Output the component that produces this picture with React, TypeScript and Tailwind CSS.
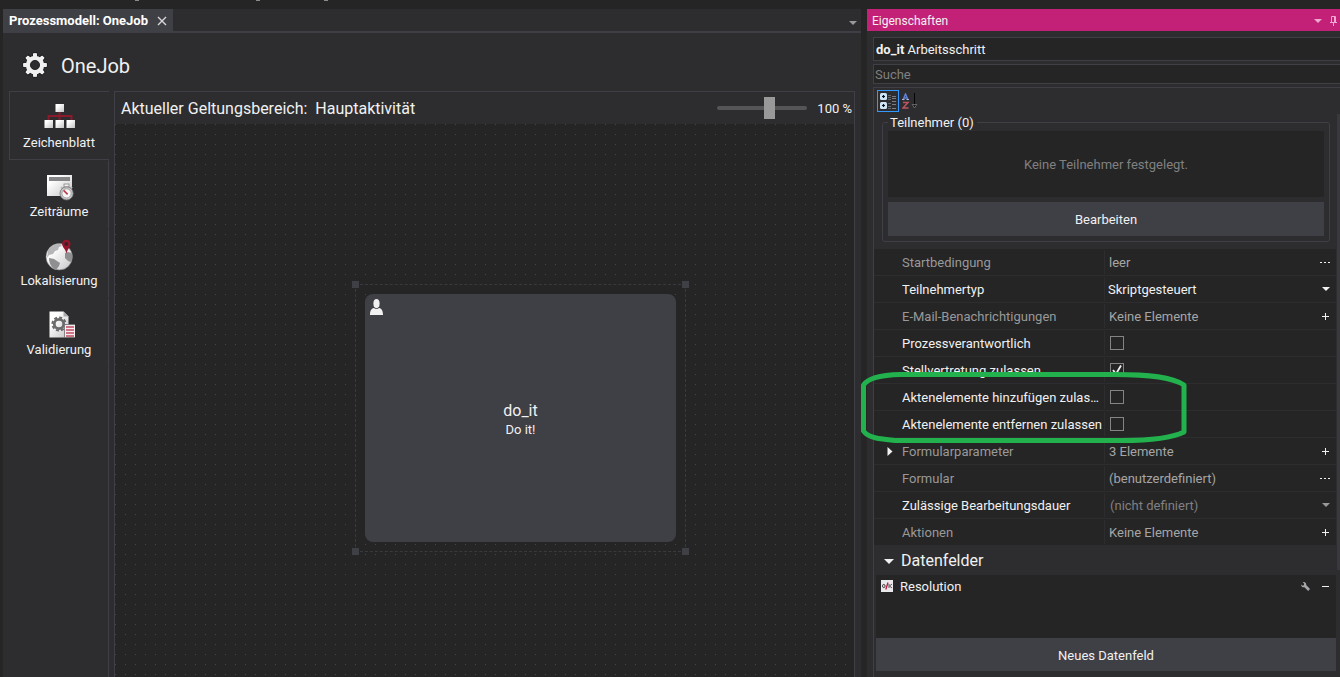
import React from "react";

type RowAction = "dots" | "plus" | "none";

interface PropertyRowProps {
  id: string;
  label: string;
  muted?: boolean;
  expandable?: boolean;
  action?: RowAction;
  children: React.ReactNode;
}

function GearIcon() {
  const teeth = [0, 45, 90, 135, 180, 225, 270, 315];
  return (
    <svg width="26" height="26" viewBox="0 0 26 26" aria-hidden="true">
      <g stroke="#161616" strokeWidth="1" fill="#f4f4f4">
        {teeth.map((a) => (
          <path key={a} d="M10.3 6l.6-5h4.2l.6 5z" transform={`rotate(${a} 13 13)`} />
        ))}
      </g>
      <circle cx="13" cy="13" r="6.800" fill="none" stroke="#f0f0f0" strokeWidth="4.800" />
      <g fill="#f0f0f0">
        {teeth.map((a) => (
          <path key={a} d="M10.600 7l.7-5.800h3.400l.7 5.800z" transform={`rotate(${a} 13 13)`} />
        ))}
      </g>
      <circle cx="13" cy="13" r="4.600" fill="#2d2d30" stroke="#1c1c1c" strokeWidth="0.8" />
    </svg>
  );
}

function Gradients() {
  return (
    <svg width="0" height="0" className="absolute" aria-hidden="true">
      <defs>
        <linearGradient id="silver" x1="0" y1="0" x2="1" y2="1">
          <stop offset="0.25" stopColor="#ffffff" />
          <stop offset="1" stopColor="#c4c4c6" />
        </linearGradient>
      </defs>
    </svg>
  );
}

function SheetIcon() {
  return (
    <svg width="32" height="32" viewBox="0 0 32 32" aria-hidden="true">
      <path d="M16.500 11v8M5.500 19v-4h23v4" fill="none" stroke="#8b1a2b" strokeWidth="2" />
      <g fill="url(#silver)">
        <rect x="12.500" y="3" width="8.500" height="8" />
        <rect x="1.500" y="19" width="8.500" height="8" />
        <rect x="12.500" y="19" width="8.500" height="8" />
        <rect x="23.500" y="19" width="8.500" height="8" />
      </g>
    </svg>
  );
}

function PeriodIcon() {
  return (
    <svg width="32" height="32" viewBox="0 0 32 32" aria-hidden="true">
      <rect x="4" y="5" width="25" height="21" fill="url(#silver)" />
      <rect x="6" y="7" width="21" height="4" fill="#858587" />
      <rect x="21" y="14" width="5" height="3" fill="#f0f0f0" stroke="#777" strokeWidth="0.7" />
      <path d="M18 17l2 2M29 17l-2 2" stroke="#bbb" strokeWidth="2" />
      <circle cx="23.6" cy="23.4" r="6.6" fill="#c9c9cb" stroke="#6e6e70" strokeWidth="0.8" />
      <circle cx="23.6" cy="23.4" r="4.6" fill="#f6f6f6" stroke="#8a8a8c" strokeWidth="0.7" />
      <path d="M20.6 20.4l4 4" stroke="#c0394a" strokeWidth="1.6" />
    </svg>
  );
}

function GlobeIcon() {
  return (
    <svg width="32" height="32" viewBox="0 0 32 32" aria-hidden="true">
      <circle cx="16.2" cy="17.8" r="13.2" fill="url(#silver)" stroke="#77777a" strokeWidth="0.6" />
      <path d="M5 11.5C8 6.500 12 5 17 5l2 2-3 1-1 3-3 1-2 3-4 1-2 3z" fill="#b5b5b8" />
      <path d="M6 19l5 1 6 4-1 3-3 4c-4-2-7-6-7-12z" fill="#8f8f92" />
      <path d="M22 14l3-1 3.500 1c1 3 .8 6-.5 9l-3-1-3-3z" fill="#8f8f92" />
      <path d="M23.300 0.800a4.200 4.200 0 0 1 4.200 4.200c0 3-3 5-4 9.500C22.500 10 19.100 8 19.100 5a4.200 4.200 0 0 1 4.200-4.200z" fill="#96142c" />
      <circle cx="23.300" cy="5" r="1.900" fill="#3a2026" />
    </svg>
  );
}

function ValidateIcon() {
  return (
    <svg width="32" height="32" viewBox="0 0 32 32" aria-hidden="true">
      <path d="M6.500 3.500h14l5 5v21h-19z" fill="url(#silver)" />
      <path d="M20.500 3.500l5 5h-5z" fill="#a9a9ab" />
      <circle cx="16" cy="16" r="6.600" fill="none" stroke="#6a6a6c" strokeWidth="2" strokeDasharray="3 2.180" />
      <circle cx="16" cy="16" r="4.700" fill="none" stroke="#6a6a6c" strokeWidth="2.800" />
      <rect x="21.500" y="16.500" width="11" height="13" fill="#f3eef0" stroke="#6e6e70" strokeWidth="0.800" />
      <path d="M23 19h8M23 22h8M23 25h8M23 28h8" stroke="#c04c62" strokeWidth="1.300" />
    </svg>
  );
}

const NAV = [
  { label: "Zeichenblatt", icon: <SheetIcon />, active: true },
  { label: "Zeiträume", icon: <PeriodIcon />, active: false },
  { label: "Lokalisierung", icon: <GlobeIcon />, active: false },
  { label: "Validierung", icon: <ValidateIcon />, active: false },
];

function DownTriangle({ className }: { className?: string }) {
  return (
    <svg width="8" height="4" viewBox="0 0 8 4" className={className} aria-hidden="true">
      <path d="M0 0h8L4 4z" fill="currentColor" />
    </svg>
  );
}

function RowActionButton({ action, label }: { action: RowAction; label: string }) {
  if (action === "none") return null;
  return (
    <button
      type="button"
      aria-label={`${label} bearbeiten`}
      className="mr-px flex h-5 w-5 items-center justify-center text-[#f1f1f1]"
    >
      {action === "dots" ? (
        <svg width="10" height="2" viewBox="0 0 10 2" aria-hidden="true">
          <path d="M0 1.500h2M4 1.500h2M8 1.500h2" stroke="currentColor" />
        </svg>
      ) : (
        <svg width="7" height="7" viewBox="0 0 7 7" aria-hidden="true">
          <path d="M0 3.500h7M3.500 0v7" stroke="currentColor" />
        </svg>
      )}
    </button>
  );
}

function PropertyRow({ id, label, muted, expandable, action = "none", children }: PropertyRowProps) {
  return (
    <div className="flex h-[27px] border-b border-[#2d2d30] last:h-[26px] last:border-b-0">
      <div className="flex w-7 shrink-0 items-center pl-3">
        {expandable && (
          <button type="button" aria-label={`${label} aufklappen`} className="text-[#f1f1f1]">
            <svg width="8" height="9" viewBox="0 0 8 9" aria-hidden="true">
              <path d="M1.500 0l5 4.500-5 4.500z" fill="currentColor" />
            </svg>
          </button>
        )}
      </div>
      <label
        htmlFor={id}
        className={`w-[202px] shrink-0 truncate leading-[27px] ${muted ? "text-[#999999]" : "text-[#f1f1f1]"}`}
      >
        {label}
      </label>
      <div className="my-px flex min-w-0 flex-1 items-center border-l border-[#2d2d30] pl-[3px]">
        <div className="relative flex min-w-0 flex-1 items-center">{children}</div>
        <RowActionButton action={action} label={label} />
      </div>
    </div>
  );
}

function TextValue({ id, value }: { id: string; value: string }) {
  return (
    <input id={id} readOnly defaultValue={value} className="w-full bg-transparent pt-px pl-px text-[#a5a5a5] outline-none" />
  );
}

function CheckValue({ id, checked }: { id: string; checked?: boolean }) {
  return (
    <span className="relative ml-0.5 flex">
      <input
        id={id}
        type="checkbox"
        defaultChecked={checked}
        className="peer h-3.5 w-3.5 appearance-none border border-[#848486] bg-[#252526]"
      />
      <svg
        width="14"
        height="14"
        viewBox="0 0 14 14"
        className="pointer-events-none absolute inset-0 hidden peer-checked:block"
        aria-hidden="true"
      >
        <path d="M3 7l3 4 5-8.500" fill="none" stroke="#f1f1f1" strokeWidth="1.800" />
      </svg>
    </span>
  );
}

function SelectValue({ id, value, muted }: { id: string; value: string; muted?: boolean }) {
  return (
    <>
      <select
        id={id}
        defaultValue={value}
        className={`w-full appearance-none bg-transparent pt-px outline-none ${muted ? "pl-0.5 text-[#808080]" : "text-[#f1f1f1]"}`}
      >
        <option>{value}</option>
      </select>
      <DownTriangle className={`pointer-events-none absolute right-1.5 ${muted ? "text-[#999999]" : "text-[#f1f1f1]"}`} />
    </>
  );
}

function DocumentPanel() {
  return (
    <section className="flex min-w-0 flex-1 flex-col bg-[#2d2d30]">
      <div className="flex h-6 shrink-0 items-stretch justify-between border-b-2 border-[#3f3f46]">
        <div className="flex w-[170px] items-center justify-between bg-[#3f3f46] pt-0.5 pr-1.5 pl-1.5">
          <span className="text-[13px] font-bold whitespace-nowrap text-white">Prozessmodell: OneJob</span>
          <button type="button" aria-label="Schließen" className="text-[#d8d8d8]">
            <svg width="10" height="10" viewBox="0 0 10 10" aria-hidden="true">
              <path d="M1 1l8 8M9 1l-8 8" stroke="currentColor" strokeWidth="1.400" />
            </svg>
          </button>
        </div>
        <button type="button" aria-label="Dokumentliste" className="pt-1.5 pr-1 text-[#999999]">
          <DownTriangle />
        </button>
      </div>

      <header className="flex h-[58px] shrink-0 items-center gap-[13px] pt-1.5 pl-[19px]">
        <GearIcon />
        <h1 className="pt-0.5 text-[20px] leading-7 text-[#f1f1f1]">OneJob</h1>
      </header>

      <div className="flex min-h-0 flex-1">
        <nav className="ml-1.5 flex w-[100px] shrink-0 flex-col">
          {NAV.map((item) => (
            <button
              key={item.label}
              type="button"
              className={`flex h-[69px] flex-col items-center border-y pt-[9px] text-[13px] leading-5 text-[#f1f1f1] ${
                item.active
                  ? "border-l border-[#3f3f46] pr-px"
                  : "border-r border-y-transparent border-r-[#3f3f46] pl-px"
              }`}
            >
              {item.icon}
              <span>{item.label}</span>
            </button>
          ))}
          <div className="flex-1 border-r border-[#3f3f46]" />
        </nav>

        <div className="mr-1.5 ml-[5px] flex min-w-0 flex-1 flex-col border border-b-0 border-[#3f3f46]">
          <div className="flex h-8 shrink-0 items-center justify-between pr-0.5 pl-1.5 text-[#f1f1f1]">
            <h2 className="pt-0.5 text-[16px] whitespace-pre">{"Aktueller Geltungsbereich:  Hauptaktivität"}</h2>
            <div className="flex items-center gap-2.5">
              <input
                type="range"
                aria-label="Zoom"
                min={0}
                max={100}
                step={0.5}
                defaultValue={59.5}
                className="h-[22px] w-[90px] appearance-none bg-transparent [&::-webkit-slider-runnable-track]:h-1 [&::-webkit-slider-runnable-track]:rounded-sm [&::-webkit-slider-runnable-track]:bg-[#555558] [&::-webkit-slider-thumb]:-mt-[9px] [&::-webkit-slider-thumb]:h-[22px] [&::-webkit-slider-thumb]:w-[11px] [&::-webkit-slider-thumb]:appearance-none [&::-webkit-slider-thumb]:bg-[#999999]"
              />
              <span className="pt-0.5 text-[13px] whitespace-nowrap">100 %</span>
            </div>
          </div>
          <div className="relative min-h-0 flex-1 overflow-hidden bg-[linear-gradient(90deg,transparent_1px,#252526_1px),linear-gradient(#464648_1px,#252526_1px)] bg-size-[10px_10px]">
            <div className="absolute top-40 left-60 flex h-[268px] w-[331px] border border-dashed border-[#3a3a3d] p-[9px]">
              <span className="absolute -top-1 -left-1 h-[7px] w-[7px] bg-[#3f3f46]" />
              <span className="absolute -top-1 -right-1 h-[7px] w-[7px] bg-[#3f3f46]" />
              <span className="absolute -bottom-1 -left-1 h-[7px] w-[7px] bg-[#3f3f46]" />
              <span className="absolute -right-1 -bottom-1 h-[7px] w-[7px] bg-[#3f3f46]" />
              <div className="relative flex flex-1 flex-col items-center justify-center gap-px rounded-lg bg-[#3f3f46] pt-[3px] text-[#f1f1f1]">
                <svg width="13" height="16" viewBox="0 0 13 16" className="absolute top-[5px] left-[5px]" aria-hidden="true">
                  <ellipse cx="6.500" cy="4.600" rx="3.100" ry="4.600" fill="#f1f1f1" />
                  <path d="M0 16c0-4 1-6.500 4-7 1.500 1.300 3.500 1.300 5 0 3 .5 4 3 4 7z" fill="#f1f1f1" />
                </svg>
                <span className="text-[16px] leading-[19px]">do_it</span>
                <span className="text-[13px] leading-[18px]">Do it!</span>
              </div>
            </div>
          </div>
        </div>
      </div>
    </section>
  );
}

function CategoryIcon() {
  return (
    <svg width="16" height="16" viewBox="0 0 16 16" aria-hidden="true">
      <rect x="0" y="0" width="7" height="7" rx="1.500" fill="#cfe6f8" />
      <rect x="0" y="9" width="7" height="7" rx="1.500" fill="#cfe6f8" />
      <path d="M2 3.500h3M3.500 2v3M2 12.500h3M3.500 11v3" stroke="#111" strokeWidth="1.200" />
      <path d="M8 2.500h3M8 4.500h3M8 6.500h3M8 10.500h3M8 13.500h3M8 15.500h3" stroke="#66676b" />
      <path d="M12 3.500h4M12 5.500h4M12 8.500h4M12 11.500h4M12 15.500h4" stroke="#7c7d81" />
    </svg>
  );
}

function SortIcon() {
  return (
    <svg width="16" height="16" viewBox="0 0 16 16" aria-hidden="true">
      <path d="M1 7l2.500-6L6 7M2 5h3" fill="none" stroke="#5f7fd0" strokeWidth="1.500" />
      <path d="M0 6.500h2.500M4.500 6.500H7" stroke="#a9b8e0" />
      <path d="M1 9.500h5L1 15h5.500" fill="none" stroke="#bb5560" strokeWidth="1.500" />
      <path d="M12.500 0v12" stroke="#050505" />
      <path d="M10.200 11.500h4.600l-2.300 3.500z" fill="#151515" stroke="#77797d" strokeWidth="0.800" />
    </svg>
  );
}

function PropertiesPanel() {
  return (
    <aside className="flex w-[473px] shrink-0 flex-col overflow-hidden bg-[#2d2d30] text-[13px] text-[#f1f1f1]">
      <div className="flex h-[22px] shrink-0 items-center justify-between bg-[#c32178] pt-0.5 pr-[3px] pl-[5px]">
        <h2 className="text-[12px]">Eigenschaften</h2>
        <div className="flex items-center gap-2 text-[#eda9ce]">
          <button type="button" aria-label="Fenstermenü">
            <DownTriangle />
          </button>
          <button type="button" aria-label="Anheften">
            <svg width="7" height="10" viewBox="0 0 7 10" aria-hidden="true">
              <path d="M1.500 6V0.500h4V6M4.500 0v6M0 6.500h7M3.500 7v3" fill="none" stroke="currentColor" />
            </svg>
          </button>
        </div>
      </div>

      <div className="mt-1.5 ml-1.5 flex h-6 shrink-0 items-center border border-r-0 border-[#3f3f46] bg-[#252526] pt-0.5 pl-0.5">
        <p>
          <b>do_it</b> Arbeitsschritt
        </p>
      </div>
      <input
        type="search"
        aria-label="Suche"
        placeholder="Suche"
        className="mt-[3px] ml-1.5 h-5 shrink-0 border border-r-0 border-[#3f3f46] bg-[#252526] pl-px outline-none placeholder:text-[#808080]"
      />

      <div className="mt-[3px] ml-1.5 flex min-h-0 flex-1 border-t border-l border-[#3f3f46]">
        <div className="flex min-w-0 flex-1 flex-col pt-0.5">
          <div className="ml-[3px] flex h-[22px] shrink-0">
            <button type="button" aria-label="Nach Kategorien" className="flex w-[22px] items-center justify-center border border-[#3399ff]">
              <CategoryIcon />
            </button>
            <button type="button" aria-label="Alphabetisch" className="flex w-[22px] items-center justify-center">
              <SortIcon />
            </button>
          </div>

          <fieldset className="mt-px mr-1.5 mb-[7px] ml-2 shrink-0 rounded-[3px] border border-[#3f3f46] px-[5px] pb-[5px]">
            <legend className="h-[18px] pr-[3px] pl-0.5 leading-5">Teilnehmer (0)</legend>
            <div className="flex h-[66px] items-center justify-center bg-[#252526] pt-0.5 text-[#808080]">Keine Teilnehmer festgelegt.</div>
            <button type="button" className="mt-[5px] h-[34px] w-full bg-[#3f3f46] pt-0.5">
              Bearbeiten
            </button>
          </fieldset>

          <div className="relative shrink-0 bg-[#252526]">
            <PropertyRow id="start" label="Startbedingung" muted action="dots">
              <TextValue id="start" value="leer" />
            </PropertyRow>
            <PropertyRow id="typ" label="Teilnehmertyp">
              <SelectValue id="typ" value="Skriptgesteuert" />
            </PropertyRow>
            <PropertyRow id="mail" label="E-Mail-Benachrichtigungen" muted action="plus">
              <TextValue id="mail" value="Keine Elemente" />
            </PropertyRow>
            <PropertyRow id="verantwortlich" label="Prozessverantwortlich">
              <CheckValue id="verantwortlich" />
            </PropertyRow>
            <PropertyRow id="vertretung" label="Stellvertretung zulassen">
              <CheckValue id="vertretung" checked />
            </PropertyRow>
            <PropertyRow id="hinzufuegen" label="Aktenelemente hinzufügen zulas…">
              <CheckValue id="hinzufuegen" />
            </PropertyRow>
            <PropertyRow id="entfernen" label="Aktenelemente entfernen zulassen">
              <CheckValue id="entfernen" />
            </PropertyRow>
            <PropertyRow id="parameter" label="Formularparameter" muted expandable action="plus">
              <TextValue id="parameter" value="3 Elemente" />
            </PropertyRow>
            <PropertyRow id="formular" label="Formular" muted action="dots">
              <TextValue id="formular" value="(benutzerdefiniert)" />
            </PropertyRow>
            <PropertyRow id="dauer" label="Zulässige Bearbeitungsdauer">
              <SelectValue id="dauer" value="(nicht definiert)" muted />
            </PropertyRow>
            <PropertyRow id="aktionen" label="Aktionen" muted action="plus">
              <TextValue id="aktionen" value="Keine Elemente" />
            </PropertyRow>
          </div>

          <button type="button" className="flex h-[30px] shrink-0 items-center gap-[7px] pt-0.5 pl-2.5 text-left text-[16px]">
            <svg width="10" height="5" viewBox="0 0 10 5" aria-hidden="true">
              <path d="M0 0h10L5 5z" fill="currentColor" />
            </svg>
            Datenfelder
          </button>

          <ul className="ml-0.5 h-[63px] shrink-0 bg-[#252526]">
            <li className="flex h-[22px] items-center pr-[7px] pl-[5px]">
              <svg width="12" height="12" viewBox="0 0 12 12" aria-hidden="true">
                <rect width="12" height="12" fill="#e9e9ec" />
                <ellipse cx="2.800" cy="6" rx="1.300" ry="1.600" fill="none" stroke="#444" />
                <path d="M7 2.500L4.800 9.500" stroke="#c2183c" strokeWidth="1.300" />
                <path d="M8 4v4M11 4L8.500 6 11 8" fill="none" stroke="#555" />
              </svg>
              <span className="ml-[7px] flex-1 pt-px">Resolution</span>
              <button type="button" aria-label="Resolution konfigurieren" className="text-[#a6a6aa]">
                <svg width="9" height="9" viewBox="0 0 9 9" aria-hidden="true">
                  <path d="M0.300 2.500l1.500 1.200 1.200-.7V1.500L1.800.3C3.800-.4 5.500 1 5.200 3L9 7 7.200 9 3.400 5.200C1.500 5.700 0 4.300.3 2.500z" fill="currentColor" />
                </svg>
              </button>
              <button type="button" aria-label="Resolution entfernen" className="ml-3 text-[#f1f1f1]">
                <svg width="7" height="7" viewBox="0 0 7 7" aria-hidden="true">
                  <path d="M0 3.500h7" stroke="currentColor" />
                </svg>
              </button>
            </li>
          </ul>
          <button type="button" className="ml-0.5 h-[33px] shrink-0 bg-[#3f3f46] pt-0.5">
            Neues Datenfeld
          </button>
        </div>
        <div className="w-1 shrink-0 pt-[26px] pl-px">
          <div className="h-[456px] bg-[#39393d]" />
        </div>
      </div>
    </aside>
  );
}

export default function App() {
  return (
    <div className="relative flex h-screen flex-col overflow-hidden bg-[#252526] font-['Roboto',sans-serif]">
      <Gradients />
      <div className="h-[9px] shrink-0">
        <svg width="340" height="2" viewBox="0 0 340 2" aria-hidden="true">
          <path d="M135 0.500h4M256 0.500h4M324 0.500h4" stroke="#8a8a8a" />
        </svg>
      </div>
      <main className="flex min-h-0 flex-1 gap-1.5 pl-[3px]">
        <DocumentPanel />
        <PropertiesPanel />
      </main>
      <svg
        width="328"
        height="76"
        viewBox="0 0 328 76"
        className="pointer-events-none absolute top-[369px] right-[152px]"
        aria-hidden="true"
      >
        <path
          d="M40 5.500H255C290 5.500 312 8 324 16V63C312 69 290 71.500 262 71.500H36C20 70 8 69 3.500 62V16C8 9 22 6 40 5.500Z"
          fill="none"
          stroke="#22b14c"
          strokeWidth="5"
          strokeLinejoin="round"
        />
      </svg>
    </div>
  );
}
